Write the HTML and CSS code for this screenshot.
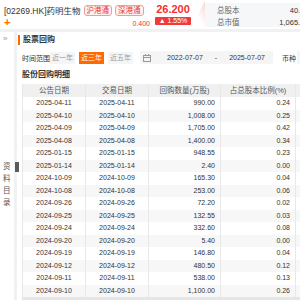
FILE: index.html
```html
<!DOCTYPE html>
<html lang="zh-CN">
<head>
    <meta charset="UTF-8">
    <meta name="viewport" content="width=device-width, initial-scale=1.0">
    <title>药明生物 股票回购</title>
    <link rel="stylesheet" href="styles.css">
</head>
<body>

<div class="header">
    <div class="stock">
        <div class="stock-top">
            <span class="stock-name">[02269.HK]药明生物</span>
            <span class="tag">沪港通</span>
            <span class="tag">深港通</span>
        </div>
        <div class="stock-bottom">
            <span class="plus">+</span>
            <span class="change">0.400</span>
        </div>
    </div>
    <div class="price">
        <div class="price-now">26.200</div>
        <div class="price-pct">▲ 1.55%</div>
    </div>
    <div class="price-deco"></div>
    <div class="info">
        <div class="info-row"><span>总股本</span><span>40.64亿</span></div>
        <div class="info-row"><span>总市值</span><span>1,065.51亿</span></div>
    </div>
</div>

<div class="main">
    <div class="sidebar">
        <div class="collapse">»</div>
        <div class="catalog">资<br>料<br>目<br>录</div>
        <div class="grip"></div>
    </div>

    <div class="content">
        <div class="title">股票回购</div>

        <div class="filter">
            <span class="filter-label">时间范围</span>
            <span class="btn">近一年</span>
            <span class="btn active">近三年</span>
            <span class="btn">近五年</span>
            <div class="dates">
                <svg class="cal" width="8" height="8" viewBox="0 0 8 8">
                    <rect x="0.5" y="1.5" width="7" height="6" fill="none" stroke="#999" stroke-width="1"/>
                    <line x1="0.5" y1="3.5" x2="7.5" y2="3.5" stroke="#999" stroke-width="1"/>
                    <line x1="2.5" y1="0" x2="2.5" y2="2" stroke="#999" stroke-width="1"/>
                    <line x1="5.5" y1="0" x2="5.5" y2="2" stroke="#999" stroke-width="1"/>
                </svg>
                <span class="date">2022-07-07</span>
                <span class="dash">-</span>
                <span class="date">2025-07-07</span>
            </div>
            <span class="filter-label currency">币种</span>
            <div class="select"></div>
        </div>

        <div class="subtitle">股份回购明细</div>

        <div class="table">
            <div class="row head">
                <div>公告日期</div>
                <div>交易日期</div>
                <div>回购数量(万股)</div>
                <div>占总股本比例(%)</div>
                <div></div>
            </div>
            <div class="row"><div>2025-04-11</div><div>2025-04-11</div><div class="num">990.00</div><div class="num">0.24</div><div></div></div>
            <div class="row"><div>2025-04-10</div><div>2025-04-10</div><div class="num">1,008.00</div><div class="num">0.25</div><div></div></div>
            <div class="row"><div>2025-04-09</div><div>2025-04-09</div><div class="num">1,705.00</div><div class="num">0.42</div><div></div></div>
            <div class="row"><div>2025-04-08</div><div>2025-04-08</div><div class="num">1,400.00</div><div class="num">0.34</div><div></div></div>
            <div class="row"><div>2025-01-15</div><div>2025-01-15</div><div class="num">948.55</div><div class="num">0.23</div><div></div></div>
            <div class="row"><div>2025-01-14</div><div>2025-01-14</div><div class="num">2.40</div><div class="num">0.00</div><div></div></div>
            <div class="row"><div>2024-10-09</div><div>2024-10-09</div><div class="num">165.30</div><div class="num">0.04</div><div></div></div>
            <div class="row"><div>2024-10-08</div><div>2024-10-08</div><div class="num">253.00</div><div class="num">0.06</div><div></div></div>
            <div class="row"><div>2024-09-26</div><div>2024-09-26</div><div class="num">72.20</div><div class="num">0.02</div><div></div></div>
            <div class="row"><div>2024-09-25</div><div>2024-09-25</div><div class="num">132.55</div><div class="num">0.03</div><div></div></div>
            <div class="row"><div>2024-09-24</div><div>2024-09-24</div><div class="num">332.60</div><div class="num">0.08</div><div></div></div>
            <div class="row"><div>2024-09-20</div><div>2024-09-20</div><div class="num">5.40</div><div class="num">0.00</div><div></div></div>
            <div class="row"><div>2024-09-19</div><div>2024-09-19</div><div class="num">146.80</div><div class="num">0.04</div><div></div></div>
            <div class="row"><div>2024-09-12</div><div>2024-09-12</div><div class="num">480.50</div><div class="num">0.12</div><div></div></div>
            <div class="row"><div>2024-09-11</div><div>2024-09-11</div><div class="num">538.00</div><div class="num">0.13</div><div></div></div>
            <div class="row"><div>2024-09-10</div><div>2024-09-10</div><div class="num">1,100.00</div><div class="num">0.26</div><div></div></div>
        </div>
        <div class="scrollbar"></div>
    </div>
</div>

</body>
</html>
```

FILE: styles.css
```css
body {
    margin: 0;
    padding: 0;
    width: 300px;
    height: 300px;
    overflow: hidden;
    background-color: #f0f1f3;
    color: #333;
    font-family: "Liberation Sans", "Noto Sans CJK SC", sans-serif;
    font-size: 8px;
}

/* Cabeçalho */
.header {
    display: flex;
    height: 29px;
    background-color: #fff;
    width: 340px;
}
.stock {
    width: 146px;
    padding: 4px 0 0 4px;
}
.stock-top {
    display: flex;
    align-items: center;
    gap: 3px;
    height: 12px;
}
.stock-name {
    font-size: 8.5px;
    color: #333;
}
.tag {
    font-size: 7.5px;
    line-height: 9px;
    padding: 0 2px;
    color: #e4393c;
    background-color: #fff1f0;
    border: 1px solid #f29b9b;
    border-radius: 3px;
}
.stock-bottom {
    display: flex;
    justify-content: space-between;
    align-items: center;
    height: 10px;
    margin-top: 1px;
}
.plus {
    color: #ff6a00;
    font-size: 11px;
    font-weight: bold;
    line-height: 10px;
}
.change {
    color: #f23030;
    font-size: 7px;
    margin-top: 3px;
}
.price {
    width: 36px;
    margin-left: 5px;
    padding-top: 3px;
    text-align: center;
}
.price-now {
    color: #f23030;
    font-size: 11px;
    font-weight: bold;
    line-height: 12px;
}
.price-pct {
    margin-top: 2px;
    height: 8px;
    line-height: 8px;
    font-size: 7px;
    color: #fff;
    background-color: #f23a3a;
    border-radius: 1px;
}
.price-deco {
    width: 14px;
    height: 26px;
    margin-top: 1px;
    background: linear-gradient(to bottom left, #fbd3d3 0%, #fff 55%);
    clip-path: polygon(100% 0, 100% 100%, 0 100%);
}
.info {
    width: 99px;
    height: 24px;
    margin-top: 3px;
    padding: 0 9px 0 12px;
    background-color: #f6f7f9;
    display: flex;
    flex-direction: column;
    justify-content: space-around;
    font-size: 7.5px;
    color: #666;
}
.info-row {
    display: flex;
    justify-content: space-between;
}
.info-row span:last-child {
    color: #333;
}

/* Corpo */
.main {
    display: flex;
    gap: 3px;
    margin-top: 3px;
    height: 268px;
}
.sidebar {
    position: relative;
    width: 14px;
    background-color: #fff;
    color: #555;
}
.collapse {
    padding: 2px 0 0 3px;
    font-size: 8px;
    color: #999;
}
.catalog {
    margin-top: 118px;
    padding-left: 3px;
    font-size: 7.5px;
    line-height: 12px;
    color: #555;
}
.grip {
    position: absolute;
    left: 15px;
    top: 130px;
    width: 4px;
    height: 10px;
    background-image: radial-gradient(circle, #555 0.7px, transparent 0.9px);
    background-size: 2px 2px;
}
.content {
    flex: 1;
    background-color: #fff;
    padding: 2px 0 0 5px;
    overflow: hidden;
}
.title {
    margin-left: -4px;
    margin-top: 1px;
    padding-left: 3px;
    border-left: 2px solid #ff6a00;
    font-size: 8px;
    font-weight: bold;
    line-height: 10px;
}
.filter {
    display: flex;
    align-items: center;
    margin-top: 6px;
    height: 13px;
    width: 330px;
    white-space: nowrap;
}
.filter-label {
    flex: none;
    width: 28px;
    font-size: 7px;
    color: #333;
}
.btn {
    flex: none;
    width: 25px;
    height: 12px;
    line-height: 12px;
    margin-right: 4px;
    text-align: center;
    font-size: 7px;
    color: #999;
    background-color: #f5f5f5;
}
.btn.active {
    color: #fff;
    background-color: #ff6a00;
}
.dates {
    flex: none;
    display: flex;
    align-items: center;
    width: 130px;
    height: 13px;
    margin-left: 3px;
    padding-left: 3px;
    background-color: #f5f5f5;
    font-size: 7px;
}
.cal {
    margin-right: 16px;
}
.dash {
    margin: 0 12px;
}
.currency {
    margin-left: 9px;
    width: 15px;
}
.select {
    flex: none;
    width: 30px;
    height: 13px;
    background-color: #f5f5f5;
}
.subtitle {
    margin-top: 6px;
    font-size: 8px;
    font-weight: bold;
    line-height: 10px;
}
.table {
    margin-top: 4px;
    width: 330px;
    border-left: 1px solid #e8e8e8;
}
.row {
    display: grid;
    grid-template-columns: 63px 63px 72px 75px 56px;
    height: 12.5px;
    line-height: 12.5px;
    font-size: 7px;
}
.row:nth-child(odd) {
    background-color: #f7f7f7;
}
.row div {
    border-right: 1px solid #e8e8e8;
    text-align: center;
    white-space: nowrap;
}
.row .num {
    text-align: right;
    padding-right: 5px;
}
.row.head {
    height: 13px;
    line-height: 13px;
    background-color: #f0f0f0;
    color: #555;
    font-size: 7.5px;
}
.scrollbar {
    height: 4px;
    width: 330px;
    background-color: #e6e6e6;
}
```
